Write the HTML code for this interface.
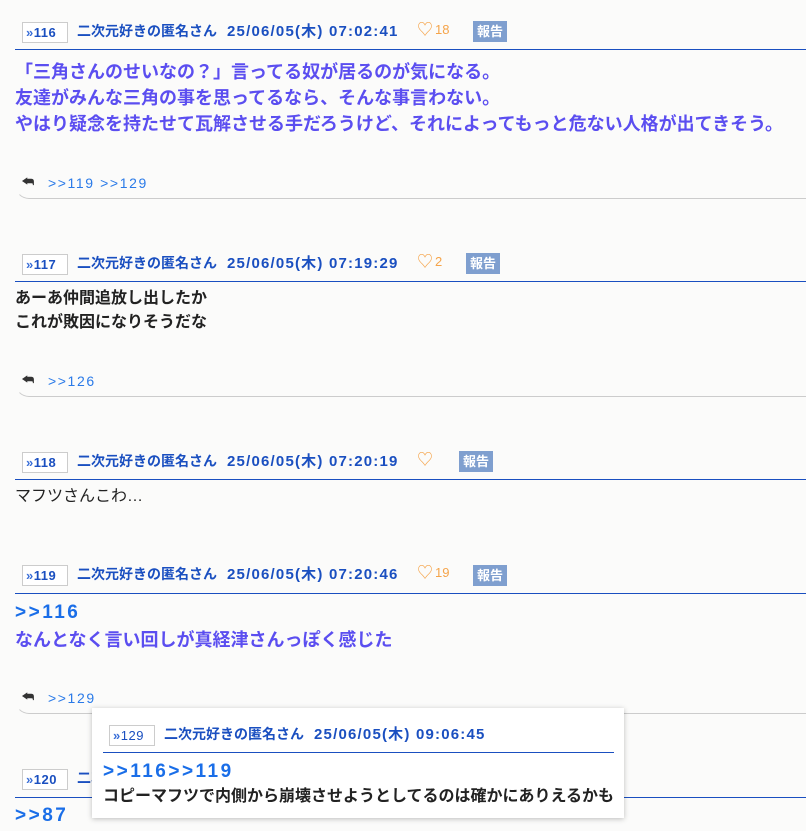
<!DOCTYPE html><html><head><meta charset="utf-8"><style>
*{margin:0;padding:0;box-sizing:border-box}
body{width:806px;height:831px;background:#fbfbfa;position:relative;overflow:hidden;font-family:"Liberation Sans","Noto Sans CJK JP",sans-serif}
.a{position:absolute;white-space:nowrap}
.no{position:absolute;height:21px;width:46px;border:1px solid #ccc;background:#fff;color:#1a4fc0;font-size:13px;font-weight:bold;line-height:19px;padding:0 0 0 3px;letter-spacing:.5px}
.no b{color:#3a6fd8}
.nm{position:absolute;color:#1a4fc0;font-size:14px;font-weight:bold;line-height:20px;white-space:nowrap}
.nm i{font-style:normal;font-size:15px;letter-spacing:1.2px;margin-left:10px}
.ht{position:absolute;color:#f5a44a;font-size:13px;line-height:20px}
.ht span{font-size:16px;vertical-align:-1px;margin-right:2px}
.rp{position:absolute;background:#7f9fcf;color:#fff;font-size:13px;font-weight:bold;width:34px;height:21px;line-height:21px;text-align:center}
.ln{position:absolute;left:15px;right:0;height:1px;background:#1a4fc0}
.pu{color:#5b4ef0;font-size:18px;font-weight:bold;line-height:26px}
.dk{color:#222;font-size:16px;font-weight:bold;line-height:24px}
.bl{color:#1a6ee8;font-size:19px;font-weight:bold;letter-spacing:2.5px}
.rr{position:absolute;left:15px;right:0;height:30px;border-bottom:1px solid #ccc;border-bottom-left-radius:14px;border-left:1px solid transparent}
.rl{position:absolute;color:#2a7ae8;font-size:14px;line-height:20px;letter-spacing:1.6px}
.ic{position:absolute;font-size:13px;color:#333;line-height:20px;font-weight:bold}
</style></head><body>

<div class="no" style="left:22px;top:22px"><b>»</b>116</div>
<div class="nm" style="left:77px;top:21px">二次元好きの匿名さん<i>25/06/05(木) 07:02:41</i></div>
<div class="ht" style="left:417px;top:20px"><span>♡</span>18</div>
<div class="rp" style="left:473px;top:21px">報告</div>
<div class="ln" style="top:49px"></div>
<div class="a pu" style="left:15px;top:59px">「三角さんのせいなの？」言ってる奴が居るのが気になる。<br>友達がみんな三角の事を思ってるなら、そんな事言わない。<br>やはり疑念を持たせて瓦解させる手だろうけど、それによってもっと危ない人格が出てきそう。</div>
<div class="rr" style="top:169px"></div>
<div class="ic" style="left:22px;top:172px">⮪</div>
<div class="rl" style="left:48px;top:173px">&gt;&gt;119 &gt;&gt;129</div>

<div class="no" style="left:22px;top:254px"><b>»</b>117</div>
<div class="nm" style="left:77px;top:253px">二次元好きの匿名さん<i>25/06/05(木) 07:19:29</i></div>
<div class="ht" style="left:417px;top:252px"><span>♡</span>2</div>
<div class="rp" style="left:466px;top:253px">報告</div>
<div class="ln" style="top:281px"></div>
<div class="a dk" style="left:15px;top:287px">あーあ仲間追放し出したか<br>これが敗因になりそうだな</div>
<div class="rr" style="top:367px"></div>
<div class="ic" style="left:22px;top:370px">⮪</div>
<div class="rl" style="left:48px;top:371px">&gt;&gt;126</div>

<div class="no" style="left:22px;top:452px"><b>»</b>118</div>
<div class="nm" style="left:77px;top:451px">二次元好きの匿名さん<i>25/06/05(木) 07:20:19</i></div>
<div class="ht" style="left:417px;top:450px"><span>♡</span></div>
<div class="rp" style="left:459px;top:451px">報告</div>
<div class="ln" style="top:479px"></div>
<div class="a" style="left:15px;top:486px;font-size:16px;color:#222;line-height:22px">マフツさんこわ…</div>

<div class="no" style="left:22px;top:565px"><b>»</b>119</div>
<div class="nm" style="left:77px;top:564px">二次元好きの匿名さん<i>25/06/05(木) 07:20:46</i></div>
<div class="ht" style="left:417px;top:563px"><span>♡</span>19</div>
<div class="rp" style="left:473px;top:565px">報告</div>
<div class="ln" style="top:593px"></div>
<div class="a bl" style="left:15px;top:601px;line-height:24px">&gt;&gt;116</div>
<div class="a pu" style="left:15px;top:627px">なんとなく言い回しが真経津さんっぽく感じた</div>
<div class="rr" style="top:684px"></div>
<div class="ic" style="left:22px;top:687px">⮪</div>
<div class="rl" style="left:48px;top:688px">&gt;&gt;129</div>

<div class="no" style="left:22px;top:769px"><b>»</b>120</div>
<div class="nm" style="left:77px;top:768px">二次元好きの匿名さん<i>25/06/05(木) 07:47:41</i></div>
<div class="ht" style="left:417px;top:767px"><span>♡</span>4</div>
<div class="rp" style="left:466px;top:768px">報告</div>
<div class="ln" style="top:797px"></div>
<div class="a bl" style="left:15px;top:804px;line-height:24px">&gt;&gt;87</div>

<div class="a" style="left:92px;top:708px;width:532px;height:110px;background:#fff;box-shadow:0 1px 5px rgba(0,0,0,.25)">
<div class="no" style="left:17px;top:17px;font-weight:normal"><b>»</b>129</div>
<div class="nm" style="left:72px;top:16px">二次元好きの匿名さん<i>25/06/05(木) 09:06:45</i></div>
<div style="position:absolute;left:11px;width:511px;top:44px;height:1px;background:#1a4fc0"></div>
<div class="a bl" style="left:11px;top:52px;line-height:24px">&gt;&gt;116&gt;&gt;119</div>
<div class="a dk" style="left:11px;top:77px">コピーマフツで内側から崩壊させようとしてるのは確かにありえるかも</div>
</div>
</body></html>
